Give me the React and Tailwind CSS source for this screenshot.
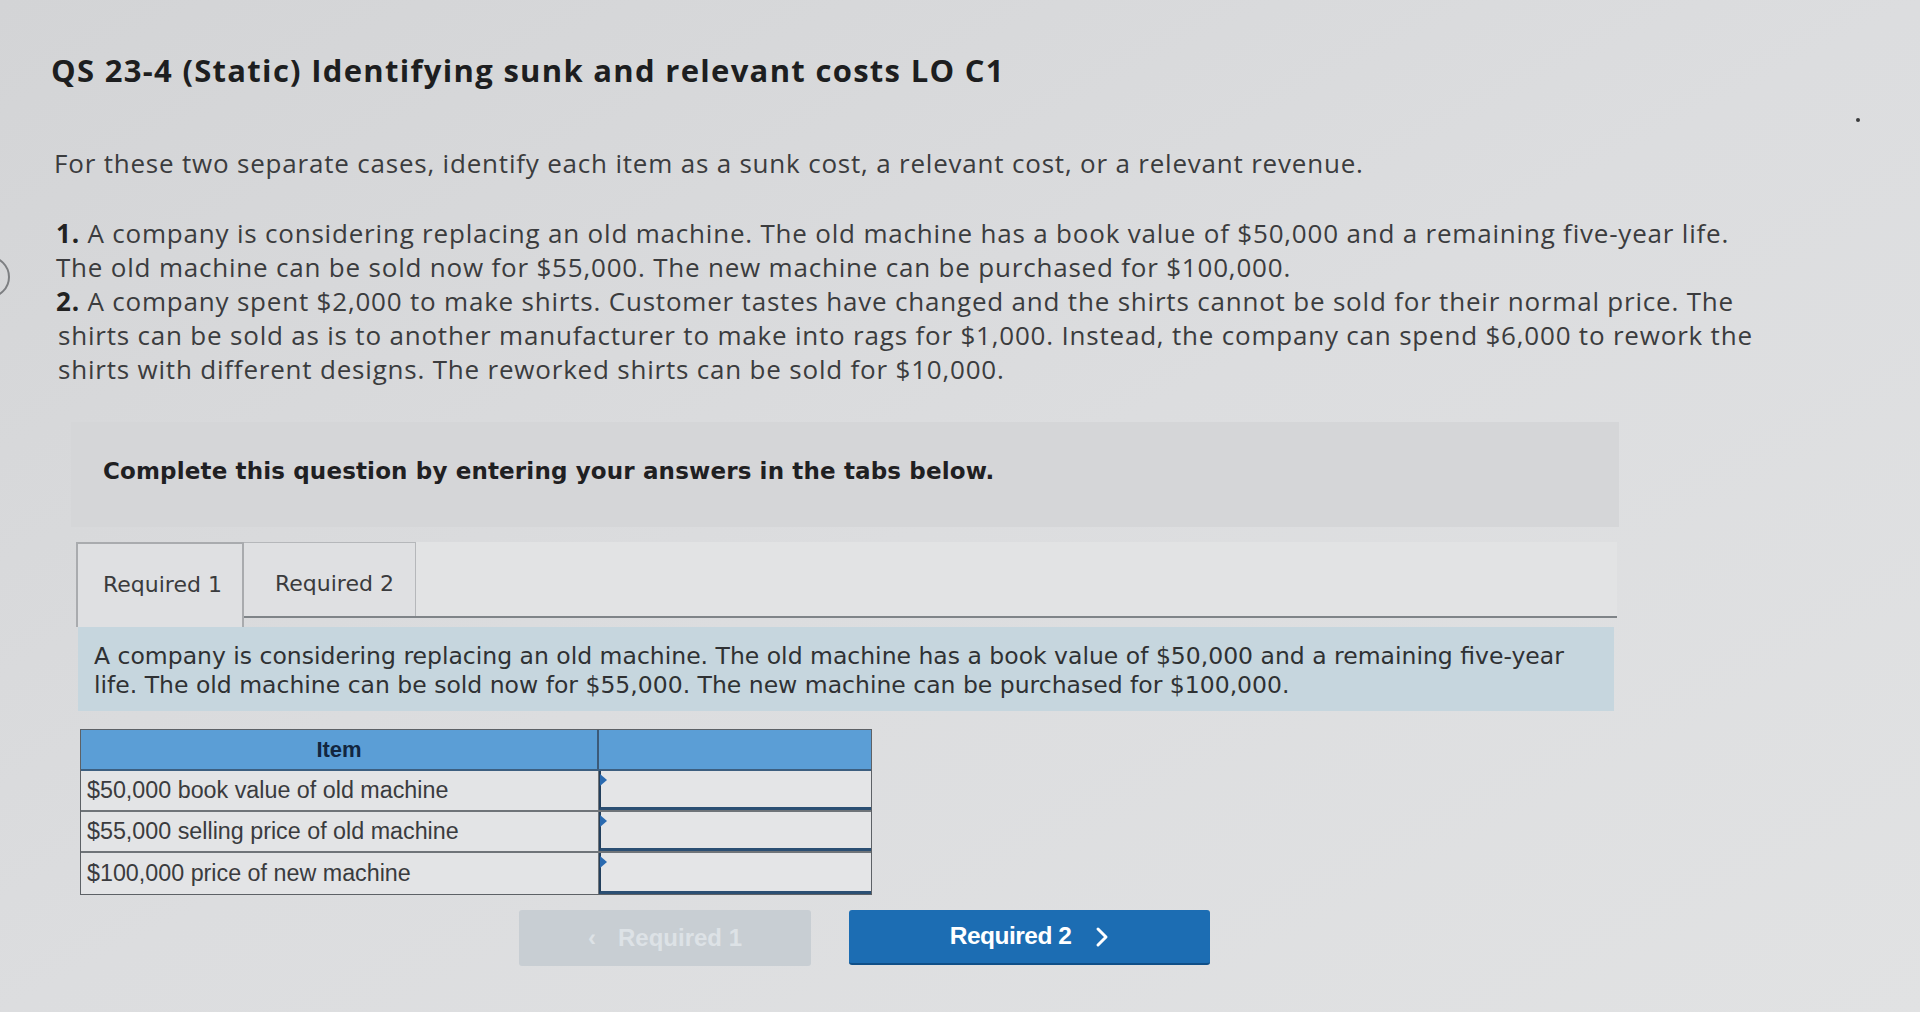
export default function App() {
  const os = { fontFamily: '"Open Sans", Lato, sans-serif' };
  return (
    <div className="relative w-[1920px] h-[1012px] overflow-hidden bg-gradient-to-br from-[#d3d4d6] via-[#dcdddf] to-[#e1e2e3]">
      {/* left edge arc */}
      <div className="absolute left-[-32px] top-[256px] w-[42px] h-[42px] rounded-full border-2 border-[#7d7f82]" />
      {/* stray dot */}
      <div className="absolute left-[1856px] top-[118px] w-[4px] h-[4px] rounded-full bg-[#3a3b3d]" />

      <div className="pl-[51px] pt-[50px]" style={os}>
        <h1 className="text-[31px] leading-[40px] font-bold text-[#1d1e20] whitespace-nowrap tracking-[1.3px]">
          QS 23-4 (Static) Identifying sunk and relevant costs LO C1
        </h1>
        <p className="mt-[55px] text-[26px] leading-[36px] text-[#3b3c3e] whitespace-nowrap pl-[3px] tracking-[0.8px]">
          For these two separate cases, identify each item as a sunk cost, a relevant cost, or a relevant revenue.
        </p>
        <div className="mt-[35px] text-[26px] leading-[34px] text-[#3b3c3e] whitespace-nowrap pl-[5px] tracking-[0.8px]">
          <div><span className="font-bold text-[#222]">1.</span> A company is considering replacing an old machine. The old machine has a book value of $50,000 and a remaining five-year life.</div>
          <div>The old machine can be sold now for $55,000. The new machine can be purchased for $100,000.</div>
          <div><span className="font-bold text-[#222]">2.</span> A company spent $2,000 to make shirts. Customer tastes have changed and the shirts cannot be sold for their normal price. The</div>
          <div className="pl-[2px]">shirts can be sold as is to another manufacturer to make into rags for $1,000. Instead, the company can spend $6,000 to rework the</div>
          <div className="pl-[2px]">shirts with different designs. The reworked shirts can be sold for $10,000.</div>
        </div>
      </div>

      {/* instructions box */}
      <div
        className="ml-[71px] mt-[36px] w-[1548px] h-[105px] bg-[#d5d6d8] flex items-center pl-[32px] pb-[6px]"
        style={{ fontFamily: '"DejaVu Sans", Verdana, sans-serif' }}
      >
        <span className="text-[23px] font-bold text-[#1f2022] whitespace-nowrap tracking-[0.15px]">
          Complete this question by entering your answers in the tabs below.
        </span>
      </div>

      {/* tabs */}
      <div className="ml-[76px] mt-[15px] w-[1541px]" style={{ fontFamily: '"DejaVu Sans", Verdana, sans-serif' }}>
        <div className="flex items-start">
          <div className="w-[168px] h-[85px] border-l-2 border-t-2 border-r-2 border-[#a9abae] bg-[#dfe0e2] flex items-center pl-[25px] pb-[2px]">
            <span className="text-[22px] text-[#3a3b3d] whitespace-nowrap">Required 1</span>
          </div>
          <div className="flex-1 flex flex-col">
            <div className="flex">
              <div className="w-[172px] h-[74px] border-t border-r border-[#b5b7ba] bg-[#dfe0e2] flex items-center pl-[31px] pt-[8px]">
                <span className="text-[22px] text-[#3a3b3d] whitespace-nowrap">Required 2</span>
              </div>
              <div className="flex-1 bg-[#e2e3e4]" />
            </div>
            <div className="h-[2px] bg-[#7f8488]" />
            <div className="h-[9px]" />
          </div>
        </div>

        {/* description */}
        <div className="ml-[2px] w-[1536px] bg-[#c6d6de] pt-[15px] pb-[11px] pl-[16px] text-[23.5px] leading-[29px] text-[#2f3133] whitespace-nowrap">
          <div>A company is considering replacing an old machine. The old machine has a book value of $50,000 and a remaining five-year</div>
          <div>life. The old machine can be sold now for $55,000. The new machine can be purchased for $100,000.</div>
        </div>

        {/* table */}
        <div className="ml-[4px] mt-[18px] w-[792px] border border-[#5d6166]" style={{ fontFamily: '"Liberation Sans", Arial, sans-serif' }}>
          <div className="flex h-[41px] bg-[#5b9ed6] border-b-2 border-[#3d5f80]">
            <div className="w-[518px] flex items-center justify-center border-r-2 border-[#3c5a78]">
              <span className="text-[22px] font-bold text-[#122640]">Item</span>
            </div>
            <div className="flex-1" />
          </div>
          {[
            '$50,000 book value of old machine',
            '$55,000 selling price of old machine',
            '$100,000 price of new machine',
          ].map((t, i) => (
            <div key={i} className={`flex h-[41px] ${i < 2 ? 'border-b-2 border-[#6f7479]' : ''}`}>
              <div className="w-[518px] flex items-center pl-[6px] bg-[#e3e4e6] border-r border-[#6f7479]">
                <span className="text-[23.3px] text-[#3a3b3e] whitespace-nowrap">{t}</span>
              </div>
              <div className="relative flex-1 bg-[#e4e5e7] border-l-2 border-[#233f5c] border-b-[3px] border-b-[#2b4f73]">
                <div className="absolute left-[-1px] top-[3px] w-0 h-0 border-t-[6px] border-b-[6px] border-l-[7px] border-t-transparent border-b-transparent border-l-[#2a6ab0]" />
              </div>
            </div>
          ))}
        </div>

        {/* buttons */}
        <div className="flex mt-[15px] ml-[443px] gap-[38px]" style={{ fontFamily: '"Liberation Sans", Arial, sans-serif' }}>
          <div className="w-[292px] h-[56px] rounded-[3px] bg-[#c8ced3] flex items-center justify-center gap-[22px] text-[#dde2e6] text-[24px] font-bold">
            <span>‹</span>
            <span>Required 1</span>
          </div>
          <div className="w-[361px] h-[55px] rounded-[3px] bg-[#1c6db3] border-b-2 border-[#0f4f88] flex items-center justify-center gap-[24px] text-white">
            <span className="text-[24.5px] font-bold tracking-[-0.5px]">Required 2</span>
            <svg width="14" height="22" viewBox="0 0 14 22" fill="none">
              <path d="M3 3l8 8-8 8" stroke="white" strokeWidth="3" strokeLinecap="round" strokeLinejoin="round" />
            </svg>
          </div>
        </div>
      </div>
    </div>
  );
}
